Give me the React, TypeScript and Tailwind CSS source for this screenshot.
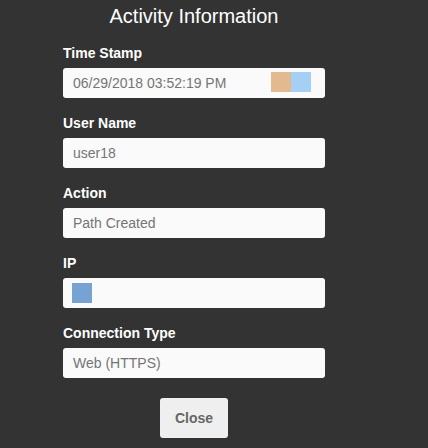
import React from 'react';

type Field = { label: string; value?: string; swatches?: string[] };

const fields: Field[] = [
    { label: 'Time Stamp', value: '06/29/2018 03:52:19 PM', swatches: ['#e3b98f', '#a5cff5'] },
    { label: 'User Name', value: 'user18' },
    { label: 'Action', value: 'Path Created' },
    { label: 'IP', swatches: ['#77a3d2'] },
    { label: 'Connection Type', value: 'Web (HTTPS)' },
];

export default function App() {
    return (
        <div className="w-[428px] h-[448px] bg-[#333333] font-['Liberation_Sans',Arial,sans-serif] overflow-hidden">
            <div className="ml-[63px] w-[262px] pt-[5px] flex flex-col">
                <h2 className="text-center text-white text-[20px] leading-[23px] mb-[17px]">Activity Information</h2>

                {fields.map((f, i) => (
                    <div key={f.label} className={i < fields.length - 1 ? 'mb-[17px]' : ''}>
                        <label className="block text-white font-bold text-[14px] leading-[16px] mb-[7px]">{f.label}</label>
                        <div className="h-[30px] bg-[#fafafa] rounded-[3px] flex items-center pl-[10px] relative">
                            {f.value && <span className="text-[#757575] text-[14px]">{f.value}</span>}
                            {/* colour chips next to the timestamp */}
                            {f.swatches && f.value && (
                                <div className="absolute left-[208px] top-[4px] flex">
                                    {f.swatches.map(c => (
                                        <div key={c} className="w-[20px] h-[20px]" style={{ backgroundColor: c }} />
                                    ))}
                                </div>
                            )}
                            {f.swatches && !f.value && (
                                <div className="w-[20px] h-[20px] -ml-[1px] bg-[#77a3d2]" />
                            )}
                        </div>
                    </div>
                ))}

                <div className="flex justify-center mt-[20px]">
                    <button className="w-[68px] h-[40px] bg-[#efefef] rounded-[3px] text-[#666] font-bold text-[14px]">Close</button>
                </div>
            </div>
        </div>
    );
}
